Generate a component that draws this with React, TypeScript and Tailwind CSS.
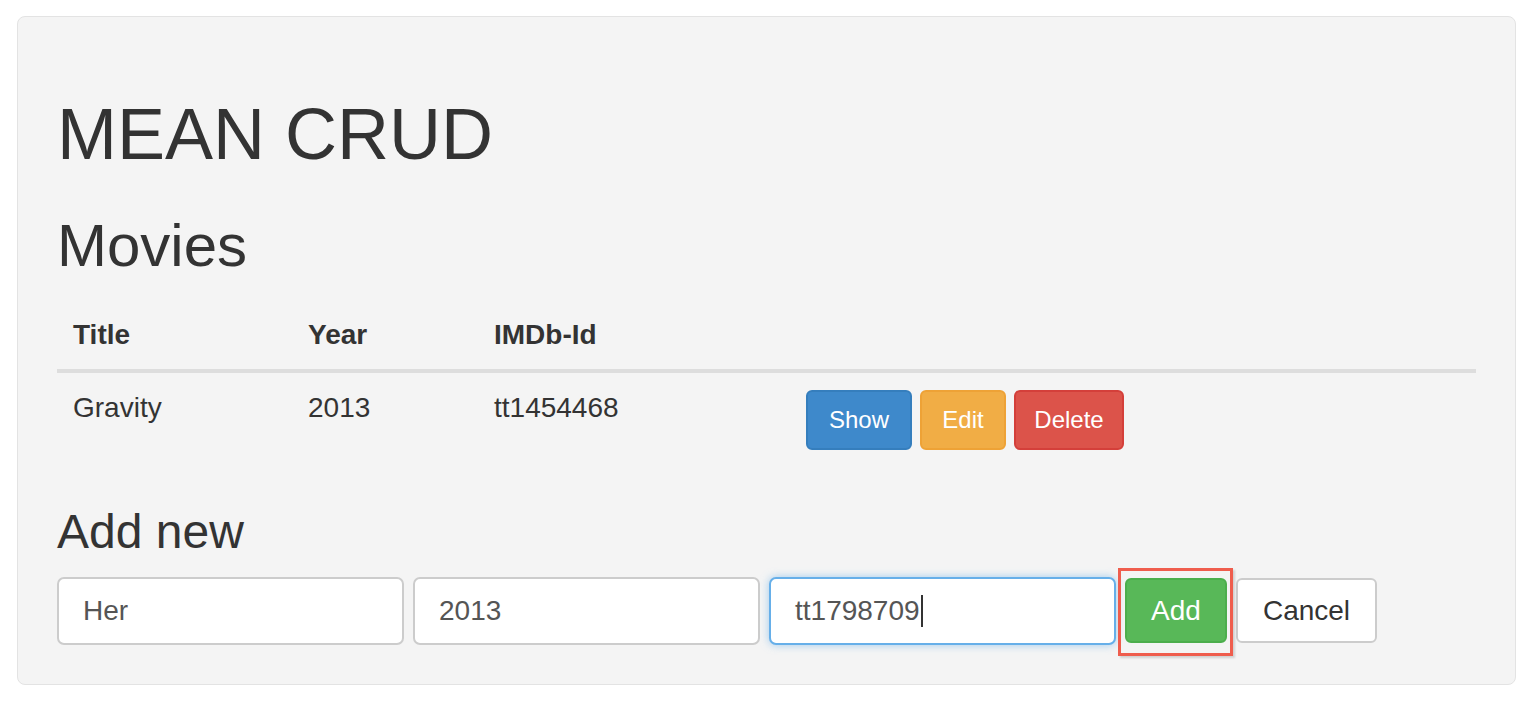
const font = { fontFamily: '"Liberation Sans", Arial, Helvetica, sans-serif' };

const movies = [{ title: "Gravity", year: "2013", imdb: "tt1454468" }];

function RowButton({ label, className }: { label: string; className: string }) {
  return (
    <button
      className={`h-[60px] rounded-[6px] border-2 text-[24px] leading-none text-white ${className}`}
    >
      {label}
    </button>
  );
}

function Field({ value, focused }: { value: string; focused?: boolean }) {
  return (
    <div
      className={`flex h-[68px] w-[347px] items-center rounded-[7px] border-2 bg-white px-[24px] text-[28px] text-[#555] ${
        focused
          ? "border-[#66afe9] shadow-[0_0_8px_rgba(102,175,233,0.6)]"
          : "border-[#cccccc]"
      }`}
    >
      {value}
      {focused && <span className="ml-[1px] inline-block h-[32px] w-[2px] bg-[#333]" />}
    </div>
  );
}

export default function App() {
  return (
    <div className="min-h-[712px] bg-white pl-[17px] pt-[16px]" style={font}>
      <div className="h-[669px] w-[1499px] rounded-[8px] border border-[#e3e3e3] bg-[#f4f4f4] pl-[39px] pr-[39px] pt-[78px] text-[#333]">
        <h1 className="text-[72px] leading-[1.1]">MEAN CRUD</h1>
        <h2 className="mt-[39px] text-[60px] leading-[1.1]">Movies</h2>

        <div className="mt-[20px]">
          <div className="grid grid-cols-[235px_186px_312px_1fr] border-b-4 border-[#dddddd] text-[28px] font-bold leading-[40px]">
            <div className="p-[16px] pb-[14px]">Title</div>
            <div className="p-[16px] pb-[14px]">Year</div>
            <div className="p-[16px] pb-[14px]">IMDb-Id</div>
            <div />
          </div>
          {movies.map((m) => (
            <div
              key={m.imdb}
              className="grid grid-cols-[235px_186px_312px_1fr] text-[28px] leading-[40px]"
            >
              <div className="p-[16px] pt-[15px]">{m.title}</div>
              <div className="p-[16px] pt-[15px]">{m.year}</div>
              <div className="p-[16px] pt-[15px]">{m.imdb}</div>
              <div className="flex gap-[8px] px-[16px] pb-[16px] pt-[17px]">
                <RowButton label="Show" className="w-[106px] border-[#357ebd] bg-[#3e89cb]" />
                <RowButton label="Edit" className="w-[86px] border-[#eea236] bg-[#f1ad45]" />
                <RowButton label="Delete" className="w-[110px] border-[#d43f3a] bg-[#dc534a]" />
              </div>
            </div>
          ))}
        </div>

        <h3 className="mt-[40px] text-[48px] leading-[1.1]">Add new</h3>
        <div className="mt-[18px] flex items-center gap-[9px]">
          <Field value="Her" />
          <Field value="2013" />
          <Field value="tt1798709" focused />
          <div className="relative">
            <span className="absolute -left-[7px] -top-[10px] h-[88px] w-[115px] border-[3px] border-[#ef5d4d] shadow-[2px_2px_2px_rgba(0,0,0,0.15)]" />
            <button className="relative h-[65px] w-[102px] rounded-[6px] border-2 border-[#4cae4c] bg-[#58b858] text-[28px] leading-none text-white">
              Add
            </button>
          </div>
          <button className="h-[65px] w-[141px] rounded-[6px] border-2 border-[#cccccc] bg-white text-[28px] leading-none text-[#333]">
            Cancel
          </button>
        </div>
      </div>
    </div>
  );
}
